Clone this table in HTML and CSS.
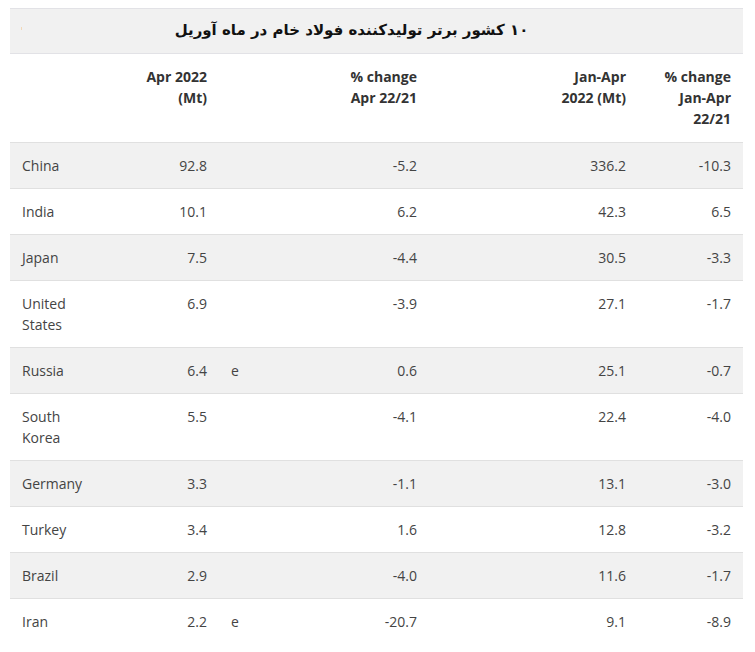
FILE: index.html
```html
<!DOCTYPE html>
<html>
<head>
<meta charset="utf-8">
<link rel="stylesheet" href="styles.css">
</head>
<body>
<div class="wrap">
  <div class="title-bar">
    <span class="dot"></span>
    <h2 class="title" dir="rtl">۱۰ کشور برتر تولیدکننده فولاد خام در ماه آوریل</h2>
  </div>
  <table class="steel">
    <colgroup>
      <col class="c1"><col class="c2"><col class="c3"><col class="c4"><col class="c5"><col class="c6">
    </colgroup>
    <thead>
      <tr>
        <th></th>
        <th class="num">Apr 2022<br>(Mt)</th>
        <th></th>
        <th class="num">% change<br>Apr 22/21</th>
        <th class="num">Jan-Apr<br>2022 (Mt)</th>
        <th class="num">% change<br>Jan-Apr<br>22/21</th>
      </tr>
    </thead>
    <tbody>
      <tr class="alt"><td>China</td><td class="num">92.8</td><td></td><td class="num">-5.2</td><td class="num">336.2</td><td class="num">-10.3</td></tr>
      <tr><td>India</td><td class="num">10.1</td><td></td><td class="num">6.2</td><td class="num">42.3</td><td class="num">6.5</td></tr>
      <tr class="alt"><td>Japan</td><td class="num">7.5</td><td></td><td class="num">-4.4</td><td class="num">30.5</td><td class="num">-3.3</td></tr>
      <tr><td>United States</td><td class="num">6.9</td><td></td><td class="num">-3.9</td><td class="num">27.1</td><td class="num">-1.7</td></tr>
      <tr class="alt"><td>Russia</td><td class="num">6.4</td><td>e</td><td class="num">0.6</td><td class="num">25.1</td><td class="num">-0.7</td></tr>
      <tr><td>South Korea</td><td class="num">5.5</td><td></td><td class="num">-4.1</td><td class="num">22.4</td><td class="num">-4.0</td></tr>
      <tr class="alt"><td>Germany</td><td class="num">3.3</td><td></td><td class="num">-1.1</td><td class="num">13.1</td><td class="num">-3.0</td></tr>
      <tr><td>Turkey</td><td class="num">3.4</td><td></td><td class="num">1.6</td><td class="num">12.8</td><td class="num">-3.2</td></tr>
      <tr class="alt"><td>Brazil</td><td class="num">2.9</td><td></td><td class="num">-4.0</td><td class="num">11.6</td><td class="num">-1.7</td></tr>
      <tr><td>Iran</td><td class="num">2.2</td><td>e</td><td class="num">-20.7</td><td class="num">9.1</td><td class="num">-8.9</td></tr>
    </tbody>
  </table>
</div>
</body>
</html>
```

FILE: styles.css
```css
html, body {
  margin: 0;
  padding: 0;
  background: #ffffff;
}
.wrap {
  padding: 8px 12px 0 10px;
  width: 733px;
  font-family: "Open Sans", "Noto Sans", sans-serif;
  font-size: 14px;
  color: #444444;
}
.title-bar {
  position: relative;
  background: #f1f1f1;
  border-top: 1px solid #e2e2e6;
  border-bottom: 1px solid #e2e2e6;
  height: 44px;
  display: flex;
  align-items: center;
  justify-content: center;
}
.dot {
  position: absolute;
  left: 11px;
  top: 18px;
  width: 1px;
  height: 3px;
  background: #f2d8b8;
}
.title {
  margin: 0 50px 2px 0;
  font-family: "DejaVu Sans", sans-serif;
  font-weight: bold;
  font-size: 15px;
  color: #111111;
  line-height: 24px;
}
.steel {
  width: 733px;
  border-collapse: collapse;
  table-layout: fixed;
}
.c1 { width: 90px; }
.c2 { width: 119px; }
.c3 { width: 40px; }
.c4 { width: 170px; }
.c5 { width: 209px; }
.c6 { width: 105px; }
.steel th,
.steel td {
  padding: 12px;
  line-height: 21px;
  text-align: left;
  vertical-align: top;
}
.steel th {
  font-weight: 700;
  color: #333333;
  padding-bottom: 13px;
}
.steel td {
  border-top: 1px solid #e0e0e0;
}
.steel .num {
  text-align: right;
}
.steel tr.alt td {
  background: #f1f1f1;
}
```
